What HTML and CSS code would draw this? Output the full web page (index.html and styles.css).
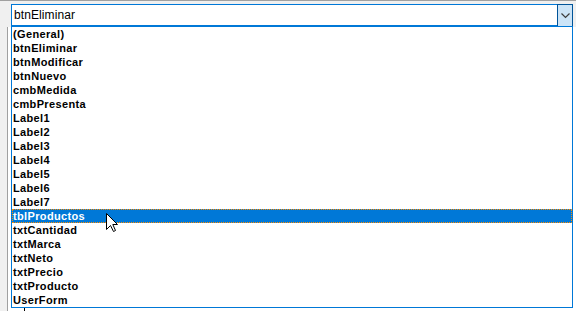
FILE: index.html
```html
<!DOCTYPE html>
<html>
<head>
<meta charset="utf-8">
<link rel="stylesheet" href="styles.css">
</head>
<body>
<div class="window">
  <div class="toolbar">
    <div class="combo">
      <span class="combo-text">btnEliminar</span>
      <span class="combo-btn">
        <svg width="9" height="6" viewBox="0 0 9 6"><path d="M0.5 0.5 L4.5 4.5 L8.5 0.5" fill="none" stroke="#3c3c3c" stroke-width="1.2"/></svg>
      </span>
    </div>
  </div>
  <div class="editor">
    <div class="gutter"></div>
    <div class="code">
      <div class="code-line"></div>
    </div>
  </div>
  <ul class="dropdown">
    <li>(General)</li>
    <li>btnEliminar</li>
    <li>btnModificar</li>
    <li>btnNuevo</li>
    <li>cmbMedida</li>
    <li>cmbPresenta</li>
    <li>Label1</li>
    <li>Label2</li>
    <li>Label3</li>
    <li>Label4</li>
    <li>Label5</li>
    <li>Label6</li>
    <li>Label7</li>
    <li class="selected">tblProductos</li>
    <li>txtCantidad</li>
    <li>txtMarca</li>
    <li>txtNeto</li>
    <li>txtPrecio</li>
    <li>txtProducto</li>
    <li>UserForm</li>
  </ul>
  <svg class="cursor" width="13" height="20" viewBox="0 0 13 20"><path d="M0.5 0.5 L0.5 16.5 L4.5 12.5 L7.5 18.5 L9.5 17.5 L6.8 11.5 L11.5 11.5 Z" fill="#fff" stroke="#000" stroke-width="1" stroke-linejoin="miter"/></svg>
</div>
</body>
</html>
```
FILE: styles.css
```css
html, body {
  margin: 0;
  padding: 0;
  background: #ffffff;
  overflow: hidden;
}
.window {
  position: relative;
  width: 576px;
  height: 311px;
  display: flex;
  flex-direction: column;
  font-family: "Liberation Sans", Arial, sans-serif;
}
.toolbar {
  background: #f0f0f0;
  border-top: 1px solid #a0a0a0;
  padding-top: 3px;
  padding-left: 11px;
  box-sizing: border-box;
  height: 27px;
}
.combo {
  width: 562px;
  height: 23px;
  box-sizing: border-box;
  border: 1px solid #0078d7;
  border-bottom-width: 2px;
  background: #fff;
  display: flex;
  align-items: center;
  justify-content: space-between;
}
.combo-text {
  font-size: 12px;
  padding-left: 2px;
  color: #000;
  letter-spacing: 0.1px;
}
.combo-btn {
  width: 16px;
  height: 22px;
  box-sizing: border-box;
  border-left: 1px solid #005499;
  border-top: 1px solid #005499;
  border-right: 1px solid #005499;
  background: #cce4f7;
  display: flex;
  align-items: center;
  justify-content: center;
  align-self: flex-start;
  margin-top: -1px;
  margin-right: -1px;
}
.combo-btn svg { display: block; margin-top: 1px; }
.editor {
  flex: 1;
  display: flex;
}
.gutter {
  width: 7px;
  background: #f0f0f0;
  border-right: 1px solid #a0a0a0;
}
.code {
  flex: 1;
  position: relative;
  background: #fff;
}
.code-line {
  margin-left: 16px;
  width: 1px;
  height: 100%;
  background: #000;
}
.dropdown {
  position: absolute;
  left: 11px;
  top: 27px;
  width: 562px;
  box-sizing: border-box;
  margin: 0;
  padding: 0;
  list-style: none;
  background: #fff;
  border: 1px solid #0078d7;
  border-top: none;
}
.dropdown li {
  height: 14px;
  line-height: 14px;
  font-size: 11px;
  font-weight: bold;
  color: #000;
  padding-left: 1px;
  box-sizing: border-box;
  white-space: nowrap;
  letter-spacing: 0.35px;
}
.dropdown li.selected {
  background: #0078d7;
  color: #fff;
  outline: 1px dotted #ff8c00;
  outline-offset: -1px;
}
.cursor {
  position: absolute;
  left: 106px;
  top: 213px;
}
```
